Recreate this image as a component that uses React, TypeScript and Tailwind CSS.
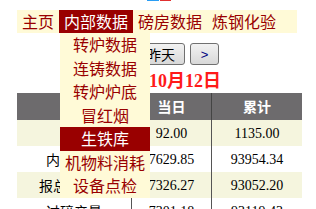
import React from "react";

const navItems = ["主页", "内部数据", "磅房数据", "炼钢化验"];
const menu = ["转炉数据", "连铸数据", "转炉炉底", "冒红烟", "生铁库", "机物料消耗", "设备点检"];
const rows = [
  ["入库", "92.00", "1135.00"],
  ["内部倒运", "7629.85", "93954.34"],
  ["报总厂产量", "7326.27", "93052.20"],
  ["过磅产量", "7301.18", "93119.43"],
];

export default function App() {
  return (
    <div
      className="relative w-[316px] h-[209px] overflow-hidden bg-white"
      style={{ fontFamily: '"Liberation Serif", "Noto Sans CJK SC", serif' }}
    >
      <div className="flex h-px">
        <div className="ml-[147px] w-[12px] bg-[#2a9df4]" />
        <div className="ml-[1px] w-[11px] bg-[#e03030]" />
      </div>

      {/* nav */}
      <div
        className="mt-[9px] ml-[17px] w-[280px] h-[23px] flex bg-[#fffad7] text-[16px] leading-[23px] text-[#990000]"
        style={{ fontFamily: '"Noto Sans CJK SC", sans-serif' }}
      >
        {navItems.map((n) => (
          <div
            key={n}
            className={
              n === "内部数据" ? "px-[5px] bg-[#990000] text-white" : "px-[5px]"
            }
          >
            {n}
          </div>
        ))}
      </div>

      {/* buttons */}
      <div className="mt-[10px] h-[22px] flex gap-[5px] ml-[104px]" style={{ fontFamily: '"Noto Sans CJK SC", sans-serif' }}>
        <button className="w-[28px] h-[22px] rounded-[3px] border border-[#707070] bg-gradient-to-b from-[#f2f2f2] to-[#d8d8d8] text-[13px] leading-none text-black">
          &lt;
        </button>
        <button className="w-[48px] h-[22px] rounded-[3px] border border-[#707070] bg-gradient-to-b from-[#f2f2f2] to-[#d8d8d8] text-[14px] leading-none text-black">
          昨天
        </button>
        <button className="w-[29px] h-[22px] rounded-[3px] border border-[#707070] bg-gradient-to-b from-[#f2f2f2] to-[#d8d8d8] text-[13px] leading-none text-[#000080]" style={{ fontFamily: '"Liberation Sans", sans-serif' }}>
          &gt;
        </button>
      </div>

      {/* date */}
      <div className="mt-[5px] h-[23px] text-center text-[18px] leading-[23px] font-bold text-[#ff1a1a]">
        2014年10月12日
      </div>

      {/* table */}
      <div className="ml-[17px] w-[285px] grid grid-cols-[115px_80px_90px] text-[14px]">
        <div className="h-[27px] bg-[#6d6b6d] border-r border-[#444]" />
        <div
          className="h-[27px] bg-[#6d6b6d] border-r border-[#444] text-white font-bold flex items-center justify-center"
          style={{ fontFamily: '"Noto Sans CJK SC", sans-serif' }}
        >
          当日
        </div>
        <div
          className="h-[27px] bg-[#6d6b6d] text-white font-bold flex items-center justify-center"
          style={{ fontFamily: '"Noto Sans CJK SC", sans-serif' }}
        >
          累计
        </div>
        {rows.map((r, i) => (
          <React.Fragment key={i}>
            <div
              className={`h-[26px] border-r border-[#555] flex items-center justify-center text-black ${i % 2 === 0 ? "bg-[#f5f5de]" : "bg-white"}`}
              style={{ fontFamily: '"Noto Sans CJK SC", sans-serif' }}
            >
              {r[0]}
            </div>
            <div className={`h-[26px] border-r border-[#555] flex items-center justify-center text-black ${i % 2 === 0 ? "bg-[#f5f5de]" : "bg-white"}`}>
              {r[1]}
            </div>
            <div className={`h-[26px] flex items-center justify-center text-black ${i % 2 === 0 ? "bg-[#f5f5de]" : "bg-white"}`}>
              {r[2]}
            </div>
          </React.Fragment>
        ))}
      </div>

      {/* dropdown */}
      <div
        className="absolute left-[60px] top-[33px] w-[90px] bg-[#fffad7] text-[16px] text-[#990000]"
        style={{ fontFamily: '"Noto Sans CJK SC", sans-serif' }}
      >
        {menu.map((m) => (
          <div
            key={m}
            className={`h-[23.5px] leading-[23.5px] text-center whitespace-nowrap ${m === "生铁库" ? "bg-[#990000] text-white" : ""}`}
          >
            {m}
          </div>
        ))}
      </div>
    </div>
  );
}
